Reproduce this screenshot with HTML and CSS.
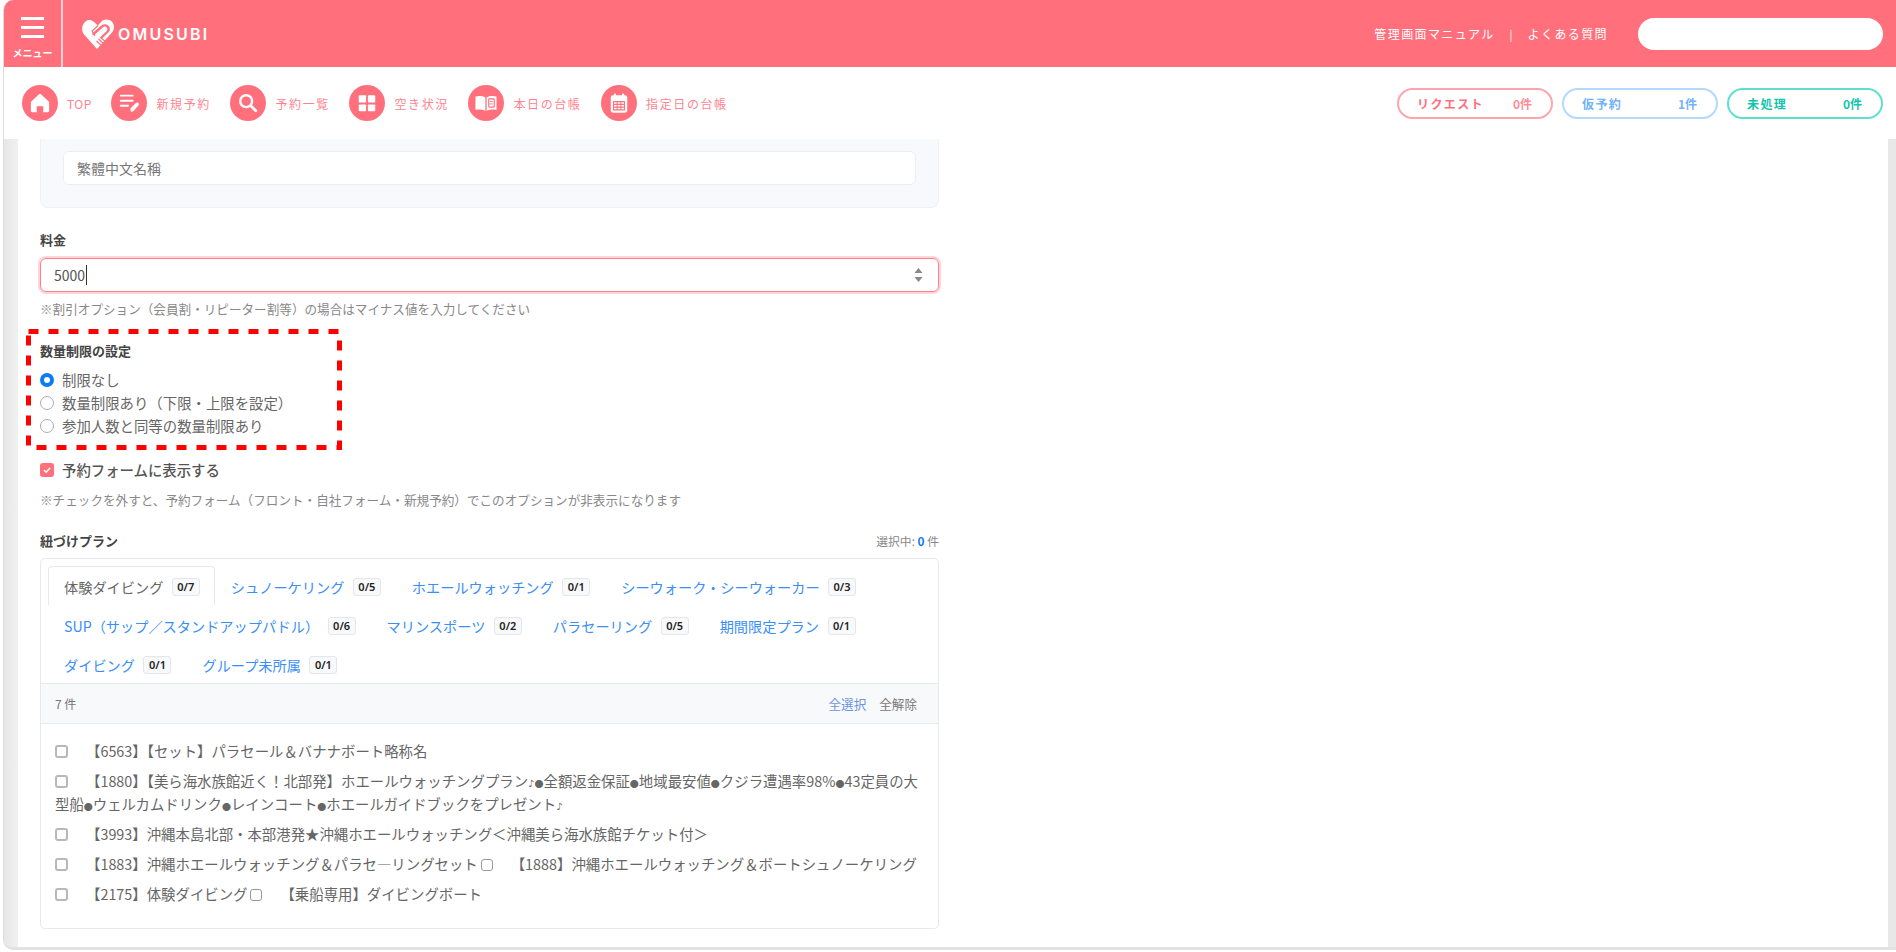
FILE: index.html
```html
<!DOCTYPE html>
<html lang="ja">
<head>
  <meta charset="UTF-8">
  <meta name="viewport" content="width=device-width, initial-scale=1.0">
  <title>OMUSUBI</title>
  <link rel="stylesheet" href="styles.css">
</head>
<body>
  <div class="frame">
    <header class="topbar">
      <div class="menu-btn">
        <span class="menu-bars"><i></i><i></i><i></i></span>
        <span class="menu-label">メニュー</span>
      </div>
      <div class="logo">
        <svg class="logo-mark" viewBox="0 0 32 30">
          <path fill="#fff" d="M15 30 L2.5 16 C-1 12 -.5 5.500 3.500 2.500 C6.500 .2 9.500 .8 12 3 L16 6.500 L19.500 2.500 C22 0 27 -.3 30 2.800 C32.800 5.800 32.500 10.500 30 13.500 Z"/>
          <path fill="none" stroke="#ff6f7c" stroke-width="2.400" stroke-linecap="round" stroke-linejoin="round" d="M11.500 15 L20 7.500 C22 5.800 24.500 6 25.800 7.800 C27 9.500 26.800 11.500 25.300 13 L19.500 18.500"/>
          <path fill="none" stroke="#ff6f7c" stroke-width="1.200" d="M16.500 20 L22 25 M18.500 18.500 L24 23 M14.500 22 L19.500 26.500 M16 6.500 L10 12 L13 17"/>
        </svg>
        <span class="logo-text">OMUSUBI</span>
      </div>
      <div class="top-links">
        <a>管理画面マニュアル</a>
        <span class="sep">|</span>
        <a>よくある質問</a>
      </div>
      <input class="top-search" type="text">
    </header>

    <nav class="subnav">
      <a class="nav-item nav-top">
        <span class="nav-icon">
          <svg viewBox="0 0 24 24"><path fill="#fff" d="M12 2 C12.500 2 13 2.200 13.400 2.600 L21.200 10.200 C21.700 10.700 22 11.300 22 12 V20.500 C22 21.400 21.400 22 20.500 22 H15.500 V15.500 H8.500 V22 H3.500 C2.600 22 2 21.400 2 20.500 V12 C2 11.300 2.300 10.700 2.800 10.200 L10.600 2.600 C11 2.200 11.500 2 12 2 Z"/></svg>
        </span>
        <span>TOP</span>
      </a>
      <a class="nav-item">
        <span class="nav-icon">
          <svg viewBox="0 0 24 24">
            <path fill="none" stroke="#fff" stroke-width="2" stroke-linecap="round" d="M3 4 H16 M3 9.500 H16 M3 15 H11"/>
            <path fill="#fff" d="M14 21.500 L13.500 18 L19.500 12 C20.300 11.200 21.500 11.200 22.300 12 C23.100 12.800 23.100 14 22.300 14.800 L16.800 21 Z"/>
          </svg>
        </span>
        <span>新規予約</span>
      </a>
      <a class="nav-item">
        <span class="nav-icon">
          <svg viewBox="0 0 24 24">
            <circle cx="10" cy="10" r="6.500" fill="none" stroke="#fff" stroke-width="2.600"/>
            <path stroke="#fff" stroke-width="3" stroke-linecap="round" d="M15 15 L20.500 20.500"/>
          </svg>
        </span>
        <span>予約一覧</span>
      </a>
      <a class="nav-item">
        <span class="nav-icon">
          <svg viewBox="0 0 24 24" fill="#fff">
            <rect x="3" y="3.500" width="8" height="8" rx="1"/>
            <rect x="13" y="3.500" width="8" height="8" rx="1"/>
            <rect x="3" y="13.500" width="8" height="7.500" rx="1"/>
            <rect x="13" y="13.500" width="8" height="7.500" rx="1"/>
          </svg>
        </span>
        <span>空き状況</span>
      </a>
      <a class="nav-item">
        <span class="nav-icon">
          <svg viewBox="0 0 24 24">
            <path fill="#fff" d="M.5 5 C4 4 8 4.200 11.300 6 V20.500 C8 19 4 18.800 .5 19.500 Z"/>
            <path fill="#fff" d="M23.500 5 C20 4 16 4.200 12.700 6 V20.500 C16 19 20 18.800 23.500 19.500 Z"/>
            <rect x="15" y="7.500" width="6" height="9" rx=".6" fill="none" stroke="#ff6f7c" stroke-width="1.300"/>
            <path stroke="#ff6f7c" stroke-width="1" d="M16.500 10.500 H19.500 M16.500 13 H19.500"/>
          </svg>
        </span>
        <span>本日の台帳</span>
      </a>
      <a class="nav-item">
        <span class="nav-icon">
          <svg viewBox="0 0 24 24">
            <rect x="3" y="3.500" width="18" height="19" rx="2.500" fill="#fff"/>
            <rect x="6.500" y="1.500" width="2.200" height="4" rx="1" fill="#fff"/>
            <rect x="15.300" y="1.500" width="2.200" height="4" rx="1" fill="#fff"/>
            <path fill="none" stroke="#ff6f7c" stroke-width="1.100" d="M6 10.500 H18 V19.500 H6 Z M6 13.500 H18 M6 16.500 H18 M10 10.500 V19.500 M14 10.500 V19.500"/>
          </svg>
        </span>
        <span>指定日の台帳</span>
      </a>
      <div class="status-list">
        <a class="status-pill request"><b>リクエスト</b><b class="count">0件</b></a>
        <a class="status-pill tentative"><b>仮予約</b><b class="count">1件</b></a>
        <a class="status-pill pending"><b>未処理</b><b class="count">0件</b></a>
      </div>
    </nav>

    <div class="body-row">
      <div class="gutter"></div>
      <main class="content">
        <div class="lang-panel">
          <input class="text-input" type="text" placeholder="繁體中文名稱">
        </div>

        <label class="field-label price-label">料金</label>
        <div class="number-input">
          <span class="number-value">5000</span>
          <svg class="spinner" viewBox="0 0 9 14"><path fill="#888" d="M4.500 0 L8.500 5 H.5 Z M.5 9 H8.500 L4.500 14 Z"/></svg>
        </div>
        <p class="hint price-hint">※割引オプション（会員割・リピーター割等）の場合はマイナス値を入力してください</p>

        <section class="limit-group">
          <svg class="callout" width="316" height="121">
            <rect x="2.500" y="2.500" width="311" height="116" fill="none" stroke="#f00" stroke-width="5" stroke-dasharray="10 10"/>
          </svg>
          <label class="field-label">数量制限の設定</label>
          <div class="radio-list">
            <label class="radio-row"><input type="radio" name="limit" checked>制限なし</label>
            <label class="radio-row"><input type="radio" name="limit">数量制限あり（下限・上限を設定）</label>
            <label class="radio-row"><input type="radio" name="limit">参加人数と同等の数量制限あり</label>
          </div>
        </section>

        <label class="show-row"><input type="checkbox" checked>予約フォームに表示する</label>
        <p class="hint show-hint">※チェックを外すと、予約フォーム（フロント・自社フォーム・新規予約）でこのオプションが非表示になります</p>

        <div class="plan-head">
          <label class="field-label">紐づけプラン</label>
          <span class="selected-count">選択中: <b>0</b> 件</span>
        </div>

        <div class="plan-box">
          <ul class="tabs">
            <li class="tab active">体験ダイビング<span class="badge">0/7</span></li>
            <li class="tab">シュノーケリング<span class="badge">0/5</span></li>
            <li class="tab">ホエールウォッチング<span class="badge">0/1</span></li>
            <li class="tab">シーウォーク・シーウォーカー<span class="badge">0/3</span></li>
            <li class="tab">SUP（サップ／スタンドアップパドル）<span class="badge">0/6</span></li>
            <li class="tab">マリンスポーツ<span class="badge">0/2</span></li>
            <li class="tab">パラセーリング<span class="badge">0/5</span></li>
            <li class="tab">期間限定プラン<span class="badge">0/1</span></li>
            <li class="tab">ダイビング<span class="badge">0/1</span></li>
            <li class="tab">グループ未所属<span class="badge">0/1</span></li>
          </ul>
          <div class="plan-tools">
            <span>7 件</span>
            <span class="tool-links"><a class="select-all">全選択</a><a>全解除</a></span>
          </div>
          <div class="plan-list">
            <label class="plan-row"><input type="checkbox">【6563】【セット】パラセール＆バナナボート略称名</label>
            <label class="plan-row"><input type="checkbox">【1880】【美ら海水族館近く！北部発】ホエールウォッチングプラン<span class="note">♪</span><span class="dot">●</span>全額返金保証<span class="dot">●</span>地域最安値<span class="dot">●</span>クジラ遭遇率98%<span class="dot">●</span>43定員の大<br>型船<span class="dot">●</span>ウェルカムドリンク<span class="dot">●</span>レインコート<span class="dot">●</span>ホエールガイドブックをプレゼント<span class="note">♪</span></label>
            <label class="plan-row"><input type="checkbox">【3993】沖縄本島北部・本部港発★沖縄ホエールウォッチング＜沖縄美ら海水族館チケット付＞</label>
            <label class="plan-row"><input type="checkbox">【1883】沖縄ホエールウォッチング＆パラセ―リングセット<input class="inline-check" type="checkbox">【1888】沖縄ホエールウォッチング＆ボートシュノーケリング</label>
            <label class="plan-row"><input type="checkbox">【2175】体験ダイビング<input class="inline-check" type="checkbox">【乗船専用】ダイビングボート</label>
          </div>
        </div>
      </main>
      <div class="scroll-track"></div>
    </div>
  </div>
</body>
</html>
```

FILE: styles.css
```css
* {
  box-sizing: border-box;
}
html, body {
  height: 100%;
}
body {
  margin: 0;
  overflow: hidden;
  background-color: white;
  font-family: "Noto Sans CJK JP", "Noto Sans", sans-serif;
  font-size: 14.4px;
  color: #666;
}
a {
  cursor: pointer;
}
.frame {
  display: flex;
  flex-direction: column;
  height: 950px;
  margin-left: 3px;
  border-left: 1px solid #ddd;
  border-bottom: 3px solid #e2e2e2;
  border-radius: 10px 0 0 10px;
  overflow: hidden;
}

/* top bar */
.topbar {
  display: flex;
  align-items: center;
  flex: none;
  height: 67px;
  padding-right: 13px;
  background-color: #ff6f7c;
  color: white;
}
.menu-btn {
  display: flex;
  flex-direction: column;
  align-items: center;
  width: 59px;
  height: 100%;
  padding-top: 17px;
  border-right: 2px solid #ffd3d7;
}
.menu-bars {
  display: flex;
  flex-direction: column;
  gap: 6px;
  width: 23px;
}
.menu-bars i {
  display: block;
  height: 3px;
  background-color: white;
}
.menu-label {
  margin-top: 8px;
  font-size: 10px;
  font-weight: 700;
  line-height: 14px;
}
.logo {
  display: flex;
  align-items: center;
  gap: 4px;
  margin-left: 19px;
}
.logo-mark {
  width: 32px;
  height: 30px;
}
.logo-text {
  font-family: Inter, sans-serif;
  font-size: 16px;
  font-weight: 600;
  letter-spacing: 2.2px;
}
.top-links {
  display: flex;
  align-items: center;
  gap: 15px;
  margin-left: auto;
  margin-right: 30px;
  font-size: 12px;
  letter-spacing: 1.4px;
}
.sep {
  font-size: 11px;
  letter-spacing: 0;
}
.top-search {
  width: 245px;
  height: 32px;
  border: none;
  border-radius: 16px;
  background-color: white;
}

/* icon nav */
.subnav {
  display: flex;
  align-items: center;
  flex: none;
  gap: 19.600px;
  height: 72px;
  padding: 0 13px 0 18px;
  background-color: white;
}
.nav-item {
  display: flex;
  align-items: center;
  gap: 9px;
  font-size: 12px;
  letter-spacing: 1.6px;
  color: #ff8490;
}
.nav-top {
  letter-spacing: .5px;
}
.nav-icon {
  display: flex;
  align-items: center;
  justify-content: center;
  width: 36px;
  height: 36px;
  border-radius: 50%;
  background-color: #ff6f7c;
}
.nav-icon svg {
  width: 22px;
  height: 22px;
}
.status-list {
  display: flex;
  gap: 9px;
  margin-left: auto;
}
.status-pill {
  display: flex;
  align-items: center;
  justify-content: space-between;
  width: 156px;
  height: 31px;
  padding: 0 19px 0 18px;
  border: 2px solid;
  border-radius: 16px;
  font-size: 12px;
  letter-spacing: 1.4px;
}
.status-pill.request {
  border-color: #ffa5ae;
  color: #ff6f7c;
}
.status-pill.request .count {
  color: #ff8d97;
}
.status-pill.tentative {
  border-color: #b3d9ff;
  color: #72b2fb;
}
.status-pill.pending {
  border-color: #5fe0cf;
  color: #12c4ac;
}
.status-pill .count {
  letter-spacing: 0;
}

/* scrolling area */
.body-row {
  display: flex;
  flex: 1;
  min-height: 0;
}
.gutter {
  flex: none;
  width: 14px;
  background: linear-gradient(to right, #e6e6e6, #f1f1f1);
}
.scroll-track {
  flex: none;
  width: 8px;
  background-color: #e8e8e8;
}
.content {
  flex: 1;
  padding-left: 22px;
  overflow: hidden;
}
.content > * {
  width: 899px;
}
.lang-panel {
  height: 69px;
  padding: 12px 22px 0 22px;
  border: 1px solid #eef0f4;
  border-top: none;
  border-radius: 0 0 8px 8px;
  background-color: #f8f9fc;
}
.text-input {
  display: block;
  width: 100%;
  height: 34px;
  padding: 0 13px;
  border: 1px solid #eceef2;
  border-radius: 6px;
  background-color: white;
  font-family: inherit;
  font-size: 14px;
}
.text-input::placeholder {
  color: #777;
}
.field-label {
  display: block;
  font-size: 13px;
  font-weight: 700;
  line-height: 19px;
  color: #444;
}
.price-label {
  margin-top: 22px;
}
.number-input {
  display: flex;
  align-items: center;
  justify-content: space-between;
  height: 34px;
  margin-top: 9px;
  padding: 0 15px 0 13px;
  border: 1px solid #ff7f8b;
  border-radius: 6px;
  box-shadow: 0 0 0 2px #ffd5d9;
  font-size: 14px;
  color: #555;
}
.number-value {
  padding-right: 1px;
  border-right: 1px solid #333;
  line-height: 20px;
}
.spinner {
  width: 9px;
  height: 14px;
}
.hint {
  margin: 0;
  font-size: 12.6px;
  line-height: 19px;
  color: #888;
}
.price-hint {
  margin-top: 7px;
}

/* limit radios with the red callout over them */
.limit-group {
  position: relative;
  margin-top: 23px;
}
.callout {
  position: absolute;
  top: -12px;
  left: -14px;
  pointer-events: none;
}
.radio-list {
  margin-top: 8px;
}
.radio-row {
  display: flex;
  align-items: center;
  gap: 8px;
  height: 23px;
}
.radio-row input {
  appearance: none;
  width: 14px;
  height: 14px;
  margin: 0;
  border: 1px solid #a9adb5;
  border-radius: 50%;
  background-color: white;
}
.radio-row input:checked {
  border: 4px solid #0b7bf5;
}
.show-row {
  display: flex;
  align-items: center;
  gap: 8px;
  height: 21px;
  margin-top: 22px;
  font-weight: 500;
  color: #555;
}
.show-row input {
  appearance: none;
  width: 14px;
  height: 14px;
  margin: 0;
  border-radius: 3px;
  background-color: #ff6f7c;
}
.show-row input:checked {
  background: #ff6f7c url("data:image/svg+xml,%3Csvg xmlns='http://www.w3.org/2000/svg' viewBox='0 0 14 14'%3E%3Cpath d='M4 7.200 L6.200 9.200 L10 5' fill='none' stroke='white' stroke-width='1.600'/%3E%3C/svg%3E") center no-repeat;
}
.show-hint {
  margin-top: 10px;
}

/* linked plans */
.plan-head {
  display: flex;
  align-items: center;
  justify-content: space-between;
  margin-top: 22px;
}
.selected-count {
  font-size: 11.800px;
  color: #888;
}
.selected-count b {
  color: #0b7bf5;
}
.plan-box {
  height: 371px;
  margin-top: 8px;
  border: 1px solid #e6e9ee;
  border-radius: 5px;
}
.tabs {
  display: flex;
  flex-wrap: wrap;
  height: 124px;
  margin: 0;
  padding: 7px 7px 0;
  list-style: none;
  font-size: 14.2px;
}
.tab {
  display: flex;
  align-items: center;
  gap: 8.500px;
  height: 39px;
  padding: 1px 14px 0 15px;
  border: 1px solid transparent;
  border-bottom: none;
  border-radius: 4px 4px 0 0;
  color: #3a8ef6;
}
.tab.active {
  border-color: #e6e9ee;
  color: #666;
}
.badge {
  display: inline-block;
  width: 28px;
  height: 18px;
  border: 1px solid #e3e6ea;
  border-radius: 3px;
  background-color: #f8f9fa;
  font-family: "Noto Sans", sans-serif;
  font-size: 11px;
  font-weight: 600;
  line-height: 16px;
  text-align: center;
  color: #222;
}
.plan-tools {
  display: flex;
  align-items: center;
  justify-content: space-between;
  height: 41px;
  padding: 0 21px 0 14px;
  border-top: 1px solid #e6e9ee;
  border-bottom: 1px solid #e6e9ee;
  background-color: #f8f9fa;
  font-size: 12px;
  color: #777;
}
.tool-links {
  display: flex;
  gap: 13px;
  font-size: 12.6px;
}
.select-all {
  color: #6b94e0;
}
.plan-list {
  display: flex;
  flex-direction: column;
  gap: 7px;
  padding: 15px 14px;
}
.plan-row {
  display: block;
  line-height: 23px;
}
.plan-row input {
  appearance: none;
  width: 13px;
  height: 13px;
  margin: 0 18px 0 0;
  border: 2px solid #b8b8b8;
  border-radius: 3px;
  vertical-align: -1px;
}
.plan-row .inline-check {
  width: 12px;
  height: 12px;
  margin-left: 3px;
  border-width: 1px;
  border-color: #999;
}
.dot {
  font-size: 9px;
  line-height: 0;
}
.note {
  font-family: "DejaVu Sans", sans-serif;
  font-size: 10px;
  line-height: 0;
}
```
